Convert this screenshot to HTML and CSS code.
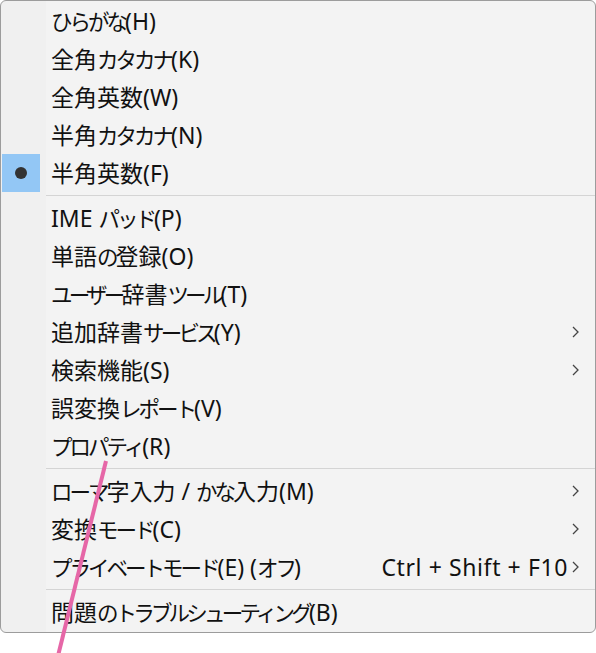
FILE: index.html
```html
<!DOCTYPE html>
<html lang="ja">
<head>
<meta charset="utf-8">
<title>IME menu</title>
<link rel="stylesheet" href="styles.css">
</head>
<body>
<div class="menu">
  <div class="item"><span class="icon"></span><span class="label"><span class="kana">ひらがな</span>(H)</span></div>
  <div class="item"><span class="icon"></span><span class="label">全角<span class="kana">カタカナ</span>(K)</span></div>
  <div class="item"><span class="icon"></span><span class="label">全角英数(W)</span></div>
  <div class="item"><span class="icon"></span><span class="label">半角<span class="kana">カタカナ</span>(N)</span></div>
  <div class="item"><span class="icon checked"><span class="dot"></span></span><span class="label">半角英数(F)</span></div>
  <div class="sep"></div>
  <div class="item"><span class="icon"></span><span class="label">IME <span class="kana">パッド</span>(P)</span></div>
  <div class="item"><span class="icon"></span><span class="label">単語<span class="kana">の</span>登録(O)</span></div>
  <div class="item"><span class="icon"></span><span class="label"><span class="kana tight">ユーザー</span>辞書<span class="kana tight">ツール</span>(T)</span></div>
  <div class="item"><span class="icon"></span><span class="label">追加辞書<span class="kana tight">サービス</span>(Y)</span><span class="key"></span><span class="chev"><svg width="7" height="12" viewBox="0 0 7 12"><polyline points="1,1 6,6 1,11" /></svg></span></div>
  <div class="item"><span class="icon"></span><span class="label">検索機能(S)</span><span class="key"></span><span class="chev"><svg width="7" height="12" viewBox="0 0 7 12"><polyline points="1,1 6,6 1,11" /></svg></span></div>
  <div class="item"><span class="icon"></span><span class="label">誤変換<span class="kana">レポート</span>(V)</span></div>
  <div class="item"><span class="icon"></span><span class="label"><span class="kana">プロパティ</span>(R)</span></div>
  <div class="sep"></div>
  <div class="item"><span class="icon"></span><span class="label"><span class="kana">ローマ</span>字入力 / <span class="kana">かな</span>入力(M)</span><span class="key"></span><span class="chev"><svg width="7" height="12" viewBox="0 0 7 12"><polyline points="1,1 6,6 1,11" /></svg></span></div>
  <div class="item"><span class="icon"></span><span class="label">変換<span class="kana">モード</span>(C)</span><span class="key"></span><span class="chev"><svg width="7" height="12" viewBox="0 0 7 12"><polyline points="1,1 6,6 1,11" /></svg></span></div>
  <div class="item"><span class="icon"></span><span class="label"><span class="kana">プライベートモード</span>(E) (<span class="kana">オフ</span>)</span><span class="key">Ctrl + Shift + F10</span><span class="chev"><svg width="7" height="12" viewBox="0 0 7 12"><polyline points="1,1 6,6 1,11" /></svg></span></div>
  <div class="sep"></div>
  <div class="item"><span class="icon"></span><span class="label">問題<span class="kana">の</span><span class="kana tight">トラブルシューティング</span>(B)</span></div>
</div>
<svg class="annot" width="596" height="653" viewBox="0 0 596 653"><line x1="106" y1="461" x2="57" y2="660" /></svg>
</body>
</html>
```
FILE: styles.css
```css
html, body {
  margin: 0;
  padding: 0;
  background: #ffffff;
}
body {
  width: 596px;
  height: 653px;
  overflow: hidden;
  position: relative;
  font-family: "Noto Sans", "Noto Sans CJK JP", sans-serif;
  font-size: 23px;
  color: #111111;
}
.menu {
  width: 594px;
  border: 1px solid #9c9c9c;
  border-radius: 6px;
  background: linear-gradient(to right, #f0f0f0 0, #f0f0f0 45px, #f3f3f3 45px);
  padding: 1px 0;
}
.item {
  display: grid;
  grid-template-columns: 50px 1fr auto 23px;
  align-items: center;
  height: 38px;
}
.icon {
  width: 38px;
  height: 38px;
  margin-left: 1px;
  display: flex;
  align-items: center;
  justify-content: center;
}
.icon.checked {
  background: #93c7f5;
}
.dot {
  width: 12px;
  height: 12px;
  border-radius: 50%;
  background: #333333;
}
.label {
  white-space: nowrap;
  line-height: 38px;
}
.kana {
  font-size: 21.5px;
  letter-spacing: -3px;
  vertical-align: 0.5px;
}
.kana.tight {
  letter-spacing: -3.8px;
}
.key {
  white-space: nowrap;
  line-height: 38px;
  letter-spacing: 0.6px;
  padding-right: 4px;
}
.chev {
  display: flex;
  align-items: center;
  justify-content: flex-start;
}
.chev svg polyline {
  fill: none;
  stroke: #444444;
  stroke-width: 1.3;
}
.sep {
  height: 1px;
  background: #d4d4d4;
  margin: 3px 0 3px 45px;
}
.annot {
  position: absolute;
  left: 0;
  top: 0;
  pointer-events: none;
}
.annot line {
  stroke: #e667a7;
  stroke-width: 4;
}
```
